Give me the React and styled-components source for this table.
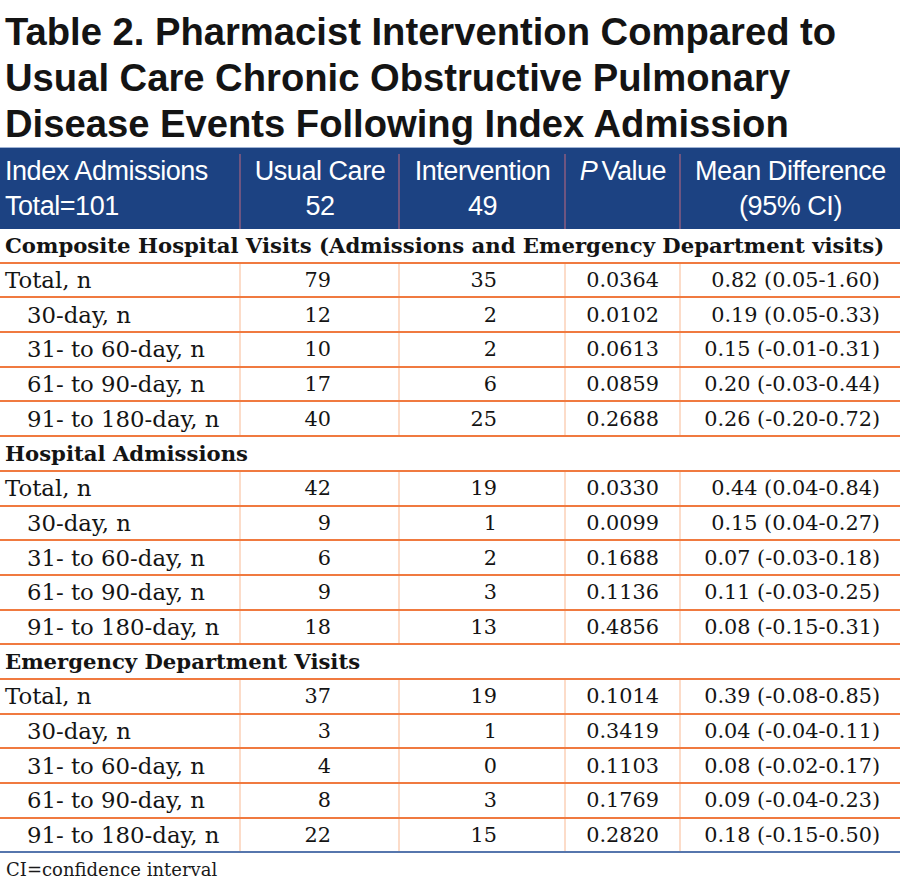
import React from "react";
import styled, { createGlobalStyle } from "styled-components";

const Global = createGlobalStyle`
  html, body { margin: 0; padding: 0; background: #ffffff; }
  body { width: 900px; }
`;

const Page = styled.div`
  width: 900px;
  background: #fff;
  display: flex;
  flex-direction: column;
`;

const Title = styled.h1`
  margin: 0;
  padding: 9px 0 0 5px;
  font-family: "Liberation Sans", Arial, sans-serif;
  font-weight: 700;
  font-size: 38.2px;
  line-height: 46px;
  color: #141414;
  letter-spacing: 0;
  border-bottom: 1px solid #9fb3d4;
`;

const COLS = "240px 159px 166px 115px 220px";

const HeadRow = styled.div`
  display: grid;
  grid-template-columns: ${COLS};
  background: #1c4282;
  padding-top: 6px;
  height: 81px;
  box-sizing: border-box;
`;

const HeadCell = styled.div`
  font-family: "Liberation Sans", Arial, sans-serif;
  font-size: 27px;
  line-height: 35px;
  letter-spacing: -0.45px;
  color: #ffffff;
  text-align: ${(p) => (p.$left ? "left" : "center")};
  padding-left: ${(p) => (p.$left ? "5px" : "0")};
  border-left: ${(p) => (p.$left ? "none" : "2px solid #6e5580")};
  margin-left: ${(p) => (p.$left ? "0" : "-1px")};
`;

const Italic = styled.i`
  margin-right: 4px;
`;

const Body = styled.div`
  display: flex;
  flex-direction: column;
`;

const SectionRow = styled.div`
  height: 34.7px;
  box-sizing: border-box;
  border-bottom: 2px solid #f07a40;
  display: flex;
  align-items: center;
  padding-left: 5px;
  font-family: "DejaVu Serif", serif;
  font-weight: 700;
  font-size: 21.2px;
  color: #141414;
  white-space: nowrap;
`;

const DataRow = styled.div`
  display: grid;
  grid-template-columns: ${COLS};
  height: 34.7px;
  box-sizing: border-box;
  border-bottom: 2px solid ${(p) => (p.$last ? "#5676ad" : "#f07a40")};
`;

const Cell = styled.div`
  display: flex;
  align-items: center;
  justify-content: ${(p) => (p.$label ? "flex-start" : "flex-end")};
  padding-left: ${(p) => (p.$label ? (p.$indent ? "27px" : "5px") : "0")};
  padding-right: ${(p) => p.$pr || "0px"};
  border-left: ${(p) => (p.$label ? "none" : "2px solid #fcdcc9")};
  margin-left: ${(p) => (p.$label ? "0" : "-1px")};
  font-family: "DejaVu Serif", serif;
  font-size: ${(p) => (p.$label ? "22.8px" : "20.8px")};
  color: #141414;
  white-space: nowrap;
`;

const Foot = styled.div`
  padding: 6px 0 0 6px;
  font-family: "DejaVu Serif", serif;
  font-size: 18px;
  color: #1a1a1a;
`;

const sections = [
  {
    title: "Composite Hospital Visits (Admissions and Emergency Department visits)",
    rows: [
      ["Total, n", "79", "35", "0.0364", "0.82 (0.05-1.60)"],
      ["30-day, n", "12", "2", "0.0102", "0.19 (0.05-0.33)"],
      ["31- to 60-day, n", "10", "2", "0.0613", "0.15 (-0.01-0.31)"],
      ["61- to 90-day, n", "17", "6", "0.0859", "0.20 (-0.03-0.44)"],
      ["91- to 180-day, n", "40", "25", "0.2688", "0.26 (-0.20-0.72)"],
    ],
  },
  {
    title: "Hospital Admissions",
    rows: [
      ["Total, n", "42", "19", "0.0330", "0.44 (0.04-0.84)"],
      ["30-day, n", "9", "1", "0.0099", "0.15 (0.04-0.27)"],
      ["31- to 60-day, n", "6", "2", "0.1688", "0.07 (-0.03-0.18)"],
      ["61- to 90-day, n", "9", "3", "0.1136", "0.11 (-0.03-0.25)"],
      ["91- to 180-day, n", "18", "13", "0.4856", "0.08 (-0.15-0.31)"],
    ],
  },
  {
    title: "Emergency Department Visits",
    rows: [
      ["Total, n", "37", "19", "0.1014", "0.39 (-0.08-0.85)"],
      ["30-day, n", "3", "1", "0.3419", "0.04 (-0.04-0.11)"],
      ["31- to 60-day, n", "4", "0", "0.1103", "0.08 (-0.02-0.17)"],
      ["61- to 90-day, n", "8", "3", "0.1769", "0.09 (-0.04-0.23)"],
      ["91- to 180-day, n", "22", "15", "0.2820", "0.18 (-0.15-0.50)"],
    ],
  },
];

const PADS = ["68px", "68px", "21px", "20px"];

export default function App() {
  return (
    <Page>
      <Global />
      <Title>
        Table 2. Pharmacist Intervention Compared to
        <br />
        Usual Care Chronic Obstructive Pulmonary
        <br />
        Disease Events Following Index Admission
      </Title>
      <HeadRow>
        <HeadCell $left>
          Index Admissions
          <br />
          Total=101
        </HeadCell>
        <HeadCell>
          Usual Care
          <br />
          52
        </HeadCell>
        <HeadCell>
          Intervention
          <br />
          49
        </HeadCell>
        <HeadCell>
          <Italic>P</Italic>Value
        </HeadCell>
        <HeadCell>
          Mean Difference
          <br />
          (95% CI)
        </HeadCell>
      </HeadRow>
      <Body>
        {sections.map((s, si) => (
          <React.Fragment key={s.title}>
            <SectionRow>{s.title}</SectionRow>
            {s.rows.map((r, ri) => (
              <DataRow
                key={r[0]}
                $last={si === sections.length - 1 && ri === s.rows.length - 1}
              >
                <Cell $label $indent={ri > 0}>
                  {r[0]}
                </Cell>
                {r.slice(1).map((v, ci) => (
                  <Cell key={ci} $pr={PADS[ci]}>
                    {v}
                  </Cell>
                ))}
              </DataRow>
            ))}
          </React.Fragment>
        ))}
      </Body>
      <Foot>CI=confidence interval</Foot>
    </Page>
  );
}
